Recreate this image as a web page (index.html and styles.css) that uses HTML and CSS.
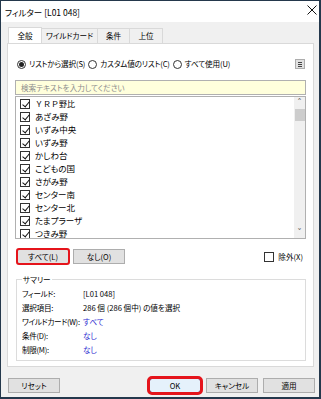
FILE: index.html
```html
<!DOCTYPE html>
<html lang="ja">
<head>
  <meta charset="UTF-8" />
  <title>フィルター [L01 048]</title>
  <link rel="stylesheet" href="styles.css">
</head>
<body>
  <div class="window">
    <div class="titlebar">
      <span class="title">フィルター [L01 048]</span>
      <svg class="close" width="10" height="10" viewBox="0 0 10 10">
        <path d="M0.5 0.5 L9.5 9.5 M9.5 0.5 L0.5 9.5" stroke="#111" stroke-width="1" fill="none"/>
      </svg>
    </div>

    <div class="client">
      <div class="tabs">
        <div class="tab active">全般</div>
        <div class="tab w-wild">ワイルドカード</div>
        <div class="tab w-cond">条件</div>
        <div class="tab w-top">上位</div>
      </div>

      <div class="panel">
        <div class="radio-row">
          <label class="radio checked"><span class="dot"></span>リストから選択(S)</label>
          <label class="radio"><span class="dot"></span>カスタム値のリスト(C)</label>
          <label class="radio"><span class="dot"></span>すべて使用(U)</label>
          <span class="menu-btn"><i></i><i></i><i></i></span>
        </div>

        <div class="search">検索テキストを入力してください</div>

        <div class="list">
          <div class="items">
            <div class="item"><span class="cb on"></span><span class="wide">ＹＲＰ野比</span></div>
            <div class="item"><span class="cb on"></span>あざみ野</div>
            <div class="item"><span class="cb on"></span>いずみ中央</div>
            <div class="item"><span class="cb on"></span>いずみ野</div>
            <div class="item"><span class="cb on"></span>かしわ台</div>
            <div class="item"><span class="cb on"></span>こどもの国</div>
            <div class="item"><span class="cb on"></span>さがみ野</div>
            <div class="item"><span class="cb on"></span>センター南</div>
            <div class="item"><span class="cb on"></span>センター北</div>
            <div class="item"><span class="cb on"></span>たまプラーザ</div>
            <div class="item"><span class="cb on"></span>つきみ野</div>
          </div>
          <div class="scrollbar">
            <span class="arrow">&#x2c4;</span>
            <span class="thumb"></span>
            <span class="track"></span>
            <span class="arrow">&#x2c5;</span>
          </div>
        </div>

        <div class="btn-row">
          <button class="btn hl">すべて(L)</button>
          <button class="btn">なし(O)</button>
          <label class="exclude"><span class="cb"></span>除外(X)</label>
        </div>

        <fieldset class="summary">
          <legend>サマリー</legend>
          <div class="srow"><span class="key">フィールド:</span><span>[L01 048]</span></div>
          <div class="srow"><span class="key">選択項目:</span><span>286 個 (286 個中) の値を選択</span></div>
          <div class="srow"><span class="key">ワイルドカード(W):</span><span class="link">すべて</span></div>
          <div class="srow"><span class="key">条件(D):</span><span class="link">なし</span></div>
          <div class="srow"><span class="key">制限(M):</span><span class="link">なし</span></div>
        </fieldset>
      </div>

      <div class="footer">
        <button class="btn">リセット</button>
        <div class="footer-right">
          <button class="btn primary hl-ok">OK</button>
          <button class="btn">キャンセル</button>
          <button class="btn">適用</button>
        </div>
      </div>
    </div>
  </div>
</body>
</html>
```

FILE: styles.css
```css
* {
  box-sizing: border-box;
}

body {
  margin: 0;
  font-family: "Noto Sans CJK JP", "Noto Sans", sans-serif;
  font-size: 7.6px;
  font-feature-settings: "palt";
  color: #000;
}

.window {
  width: 321px;
  height: 399px;
  border: 1px solid #24384c;
  border-right-width: 2px;
  border-bottom-width: 2px;
  background: #f0f0f0;
  display: flex;
  flex-direction: column;
}

.titlebar {
  height: 21px;
  background: #fff;
  display: flex;
  align-items: center;
  justify-content: space-between;
  padding: 0 2px 0 4px;
}

.title {
  font-size: 8.5px;
}

.close {
  margin-bottom: 3px;
}

.client {
  flex: 1;
  padding: 6px 5px 0 6px;
  display: flex;
  flex-direction: column;
}

/* Tabs */
.tabs {
  display: flex;
  height: 15px;
  padding-left: 1px;
  position: relative;
  z-index: 1;
}

.tab {
  width: 33px;
  height: 15px;
  border: 1px solid #d9d9d9;
  border-bottom: none;
  margin-left: -1px;
  background: #f0f0f0;
  display: flex;
  align-items: center;
  justify-content: center;
  line-height: 1;
}

.tab.active {
  background: #fff;
  height: 16px;
  margin-left: 0;
  margin-top: -1px;
  margin-bottom: -1px;
  width: 34px;
}

.w-wild { width: 57px; }
.w-cond { width: 33px; }
.w-top { width: 34px; }

/* Panel */
.panel {
  background: #fff;
  border: 1px solid #d9d9d9;
  height: 324px;
  padding: 0 7px;
}

.radio-row {
  display: flex;
  align-items: center;
  height: 12px;
  margin-top: 14px;
  padding-left: 2px;
  letter-spacing: -0.15px;
}

.radio {
  display: flex;
  align-items: center;
  margin-right: 3px;
  line-height: 1;
}

.radio .dot {
  width: 9px;
  height: 9px;
  border: 1px solid #333;
  border-radius: 50%;
  margin-right: 3px;
  display: flex;
  align-items: center;
  justify-content: center;
}

.radio.checked .dot::after {
  content: "";
  width: 5px;
  height: 5px;
  border-radius: 50%;
  background: #222;
}

.menu-btn {
  margin-left: auto;
  margin-right: 1px;
  width: 10px;
  height: 10px;
  border: 1px solid #adadad;
  background: #e1e1e1;
  display: flex;
  flex-direction: column;
  justify-content: center;
  gap: 1px;
  padding: 0 2px;
}

.menu-btn i {
  display: block;
  height: 1px;
  background: #444;
}

.search {
  margin-top: 10px;
  height: 15px;
  border: 1px solid #b0b0b0;
  background: #ffffdc;
  color: #8c8c8c;
  padding-left: 5px;
  display: flex;
  align-items: center;
  line-height: 1;
}

/* List */
.list {
  margin-top: 1px;
  height: 143px;
  border: 1px solid #b0b0b0;
  display: flex;
  overflow: hidden;
}

.items {
  flex: 1;
}

.item {
  height: 13px;
  display: flex;
  align-items: center;
  padding-left: 4px;
  font-size: 8.5px;
  line-height: 1;
}

.item .wide {
  font-feature-settings: normal;
  font-size: 8px;
}

.cb {
  width: 10px;
  height: 10px;
  border: 1px solid #333;
  margin-right: 5px;
  position: relative;
  flex: none;
}

.cb.on::after {
  content: "";
  position: absolute;
  left: 2.5px;
  top: 0px;
  width: 3px;
  height: 6px;
  border: solid #111;
  border-width: 0 1.5px 1.5px 0;
  transform: rotate(40deg);
}

.scrollbar {
  width: 11px;
  background: #f0f0f0;
  display: flex;
  flex-direction: column;
  align-items: center;
}

.scrollbar .arrow {
  height: 11px;
  font-size: 9px;
  line-height: 11px;
  color: #606060;
  font-family: "DejaVu Sans", sans-serif;
}

.scrollbar .thumb {
  width: 10px;
  height: 12px;
  background: #cdcdcd;
  margin-top: 1px;
}

.scrollbar .track {
  flex: 1;
}

/* Buttons */
.btn {
  font: inherit;
  font-feature-settings: "palt";
  width: 52px;
  height: 15px;
  border: 1px solid #adadad;
  background: #e1e1e1;
  color: #000;
  padding: 0;
  line-height: 1;
}

.btn-row {
  display: flex;
  align-items: center;
  margin-top: 10px;
  padding-left: 2px;
  gap: 4px;
}

.btn.hl {
  outline: 2px solid #e5141b;
  outline-offset: -1px;
  border-radius: 2px;
}

.exclude {
  margin-left: auto;
  margin-right: 3px;
  display: flex;
  align-items: center;
  line-height: 1;
}

.exclude .cb {
  width: 10px;
  height: 10px;
  margin-right: 4px;
}

/* Summary */
.summary {
  margin: 10px 0 0 1px;
  padding: 2px 0 3px 5px;
  border: 1px solid #dcdcdc;
  min-width: 0;
}

.summary legend {
  padding: 0 1px;
  line-height: 11px;
}

.srow {
  display: flex;
  height: 14px;
  align-items: center;
  line-height: 1;
  white-space: nowrap;
}

.key {
  width: 61px;
  flex: none;
  letter-spacing: -0.3px;
}

.link {
  color: #2b2bd0;
}

/* Footer */
.footer {
  margin-top: 11px;
  margin-right: -1px;
  padding-left: 1px;
  display: flex;
  justify-content: space-between;
}

.footer-right {
  display: flex;
  gap: 5px;
}

.btn.primary {
  background: #e5f1fb;
  border-color: #0078d7;
}

.btn.hl-ok {
  outline: 3px solid #e5141b;
  outline-offset: -1px;
  border-radius: 3px;
}
```
